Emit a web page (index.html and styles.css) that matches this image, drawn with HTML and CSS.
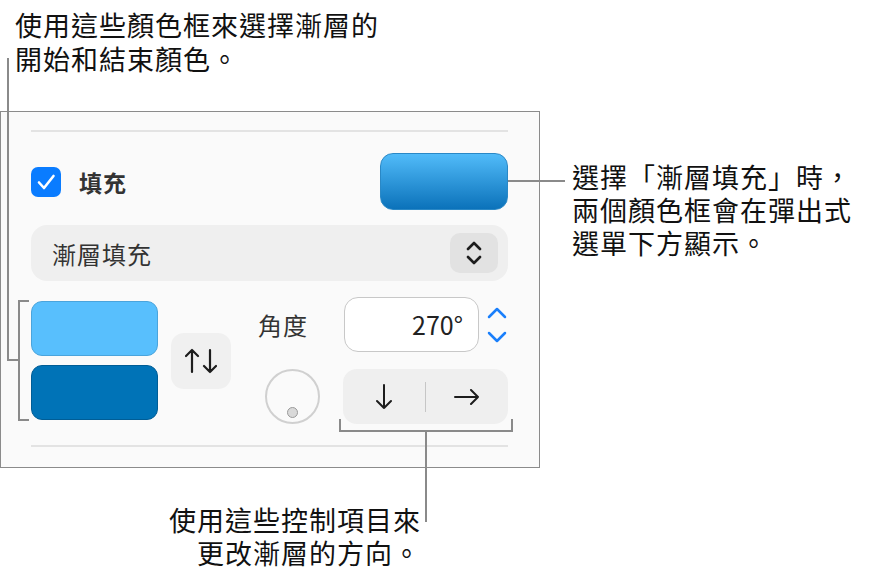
FILE: index.html
```html
<!DOCTYPE html>
<html lang="zh-Hant">
<head>
  <meta charset="UTF-8">
  <meta name="viewport" content="width=device-width, initial-scale=1.0">
  <title>漸層填充</title>
  <link rel="stylesheet" href="styles.css">
</head>
<body>
  <div class="stage">
    <p class="note note-top">使用這些顏色框來選擇漸層的<br>開始和結束顏色。</p>

    <section class="panel">
      <div class="rule"></div>

      <div class="fill-row">
        <span class="checkbox">
          <svg width="30" height="30" viewBox="0 0 30 30"><path d="M8 15.5 L13 21 L22.5 9" fill="none" stroke="#fff" stroke-width="2.6" stroke-linecap="round" stroke-linejoin="round"/></svg>
        </span>
        <span class="fill-label">填充</span>
        <span class="fill-swatch"></span>
      </div>

      <div class="select">
        <span class="select-text">漸層填充</span>
        <span class="select-btn">
          <svg width="16" height="26" viewBox="0 0 16 26"><path d="M2 9 L8 3 L14 9 M2 17 L8 23 L14 17" fill="none" stroke="#1d1d1d" stroke-width="2.6" stroke-linecap="round" stroke-linejoin="round"/></svg>
        </span>
      </div>

      <div class="grad-row">
        <div class="wells">
          <div class="well well-start"></div>
          <div class="well well-end"></div>
        </div>

        <button class="swap">
          <svg width="32" height="26" viewBox="0 0 32 26"><path d="M7 24 L7 2 M1 8 L7 2 L13 8 M25 2 L25 24 M19 18 L25 24 L31 18" fill="none" stroke="#1d1d1d" stroke-width="2.2" stroke-linecap="round" stroke-linejoin="round"/></svg>
        </button>

        <div class="angle">
          <span class="angle-label">角度</span>
          <div class="angle-field">
            <span class="angle-input">270°</span>
            <span class="stepper">
              <svg width="20" height="36" viewBox="0 0 20 36"><path d="M2 10 L10 2 L18 10 M2 26 L10 34 L18 26" fill="none" stroke="#1a7ffb" stroke-width="2.5" stroke-linecap="round" stroke-linejoin="round"/></svg>
            </span>
          </div>
          <div class="dial"><span class="dial-dot"></span></div>
          <div class="segmented">
            <span class="seg">
              <svg width="16" height="26" viewBox="0 0 16 26"><path d="M8 1 L8 24 M1 17 L8 24 L15 17" fill="none" stroke="#1d1d1d" stroke-width="2" stroke-linecap="round" stroke-linejoin="round"/></svg>
            </span>
            <span class="seg-divider"></span>
            <span class="seg">
              <svg width="26" height="16" viewBox="0 0 26 16"><path d="M1 8 L24 8 M17 1 L24 8 L17 15" fill="none" stroke="#1d1d1d" stroke-width="2" stroke-linecap="round" stroke-linejoin="round"/></svg>
            </span>
          </div>
        </div>
      </div>

      <div class="rule rule-bottom"></div>
    </section>

    <p class="note note-bottom">使用這些控制項目來<br>更改漸層的方向。</p>

    <p class="note note-right">選擇「漸層填充」時，<br>兩個顏色框會在彈出式<br>選單下方顯示。</p>

    <!-- callout leader lines -->
    <span class="lead lead-top-v"></span>
    <span class="lead lead-top-h"></span>
    <span class="lead lead-bracket-v"></span>
    <span class="lead lead-bracket-t1"></span>
    <span class="lead lead-bracket-t2"></span>
    <span class="lead lead-right"></span>
    <span class="lead lead-bot-l"></span>
    <span class="lead lead-bot-r"></span>
    <span class="lead lead-bot-h"></span>
    <span class="lead lead-bot-v"></span>
  </div>
</body>
</html>
```

FILE: styles.css
```css
body {
  margin: 0;
  background: #fff;
  font-family: "Noto Sans CJK TC", "Noto Sans", sans-serif;
  color: #111;
}

.stage {
  position: relative;
  width: 870px;
  height: 579px;
  overflow: hidden;
}

.note {
  margin: 0;
  font-size: 27px;
  line-height: 33px;
  letter-spacing: 1px;
  color: #111;
}

.note-top {
  padding: 8px 0 0 15px;
  line-height: 34px;
}

.note-bottom {
  width: 421px;
  margin-top: 35px;
  text-align: right;
}

.note-right {
  position: absolute;
  left: 572px;
  top: 160px;
}

/* panel */
.panel {
  box-sizing: border-box;
  width: 540px;
  margin-top: 35px;
  padding: 18px 31px 20px 30px;
  background: #fafafa;
  border: 1px solid #8b8b8b;
}

.rule {
  height: 2px;
  background: #e3e3e3;
}

.rule-bottom {
  margin-top: 21px;
}

.fill-row {
  display: flex;
  align-items: center;
  height: 57px;
  margin-top: 21px;
}

.checkbox {
  display: flex;
  width: 30px;
  height: 30px;
  border-radius: 7px;
  background: #0a7cff;
}

.fill-label {
  margin-left: 18px;
  font-size: 23px;
  font-weight: 600;
  letter-spacing: 1px;
  color: #333;
}

.fill-swatch {
  box-sizing: border-box;
  width: 128px;
  height: 57px;
  margin-left: auto;
  border-radius: 13px;
  border: 1px solid #2a88c6;
  background: linear-gradient(to bottom, #51bbf9, #0b72ba);
}

.select {
  display: flex;
  align-items: center;
  height: 56px;
  margin-top: 15px;
  padding: 0 10px 0 21px;
  border-radius: 16px;
  background: #efefef;
}

.select-text {
  font-size: 24px;
  letter-spacing: 1px;
  color: #333;
}

.select-btn {
  display: flex;
  align-items: center;
  justify-content: center;
  width: 48px;
  height: 40px;
  margin-left: auto;
  border-radius: 10px;
  background: #e2e2e2;
}

/* gradient controls */
.grad-row {
  display: flex;
  align-items: center;
  margin-top: 16px;
}

.wells {
  display: flex;
  flex-direction: column;
  gap: 9px;
  width: 127px;
}

.well {
  box-sizing: border-box;
  height: 55px;
  border-radius: 11px;
}

.well-start {
  background: #58bffd;
  border: 1px solid #4aa4dc;
}

.well-end {
  background: #0073b7;
  border: 1px solid #005d96;
}

.swap {
  display: flex;
  align-items: center;
  justify-content: center;
  width: 60px;
  height: 56px;
  margin-left: 13px;
  padding: 0;
  border: none;
  border-radius: 13px;
  background: #f0f0f0;
}

.angle {
  display: grid;
  grid-template-columns: 112px 165px;
  grid-template-rows: 55px 55px;
  row-gap: 17px;
  align-items: center;
}

.angle-label {
  margin-left: 27px;
  font-size: 24px;
  letter-spacing: 1px;
  color: #333;
}

.angle-field {
  display: flex;
  align-items: center;
  gap: 8px;
  margin-left: 1px;
}

.angle-input {
  box-sizing: border-box;
  width: 135px;
  height: 55px;
  padding-right: 15px;
  border: 1.5px solid #c8c8c8;
  border-radius: 14px;
  background: #fff;
  font-size: 25px;
  line-height: 52px;
  text-align: right;
  color: #222;
}

.stepper {
  display: flex;
}

.dial {
  position: relative;
  box-sizing: border-box;
  width: 55px;
  height: 55px;
  margin-left: 34px;
  border: 2px solid #d0d0d0;
  border-radius: 50%;
}

.dial-dot {
  position: absolute;
  left: 20px;
  top: 36px;
  box-sizing: border-box;
  width: 11px;
  height: 11px;
  border: 1.5px solid #9a9a9a;
  border-radius: 50%;
  background: #d9d9d9;
}

.segmented {
  display: grid;
  grid-template-columns: 1fr auto 1fr;
  align-items: center;
  height: 55px;
  border-radius: 14px;
  background: #efefef;
}

.seg {
  display: flex;
  justify-content: center;
}

.seg-divider {
  width: 1.5px;
  height: 30px;
  background: #c6c6c6;
}

/* callout leader lines */
.lead {
  position: absolute;
  background: #8a8a8a;
}

.lead-top-v { left: 7px; top: 58px; width: 2px; height: 303px; }
.lead-top-h { left: 7px; top: 359px; width: 13px; height: 2px; }
.lead-bracket-v { left: 18px; top: 300px; width: 2px; height: 121px; }
.lead-bracket-t1 { left: 18px; top: 300px; width: 11px; height: 2px; }
.lead-bracket-t2 { left: 18px; top: 419px; width: 11px; height: 2px; }
.lead-right { left: 508px; top: 180px; width: 57px; height: 2px; }
.lead-bot-l { left: 339px; top: 419px; width: 2px; height: 13px; }
.lead-bot-r { left: 511px; top: 419px; width: 2px; height: 13px; }
.lead-bot-h { left: 339px; top: 430px; width: 174px; height: 2px; }
.lead-bot-v { left: 425px; top: 431px; width: 2px; height: 91px; }
```
